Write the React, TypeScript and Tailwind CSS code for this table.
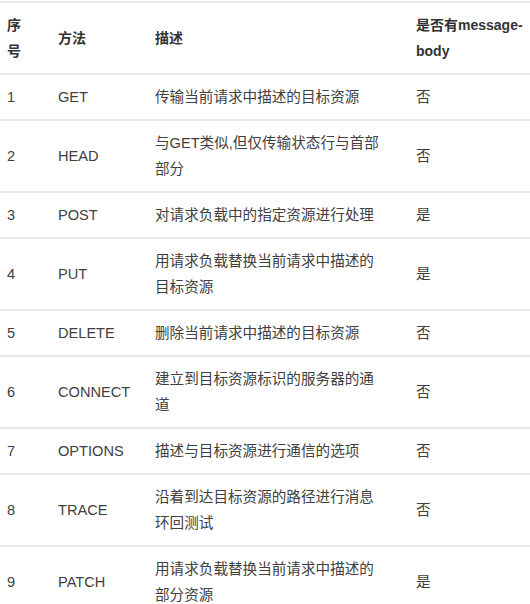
const rows = [
  { id: "1", method: "GET", desc: "传输当前请求中描述的目标资源", body: "否" },
  { id: "2", method: "HEAD", desc: "与GET类似,但仅传输状态行与首部部分", body: "否" },
  { id: "3", method: "POST", desc: "对请求负载中的指定资源进行处理", body: "是" },
  { id: "4", method: "PUT", desc: "用请求负载替换当前请求中描述的目标资源", body: "是" },
  { id: "5", method: "DELETE", desc: "删除当前请求中描述的目标资源", body: "否" },
  { id: "6", method: "CONNECT", desc: "建立到目标资源标识的服务器的通道", body: "否" },
  { id: "7", method: "OPTIONS", desc: "描述与目标资源进行通信的选项", body: "否" },
  { id: "8", method: "TRACE", desc: "沿着到达目标资源的路径进行消息环回测试", body: "否" },
  { id: "9", method: "PATCH", desc: "用请求负载替换当前请求中描述的部分资源", body: "是" },
];

export default function App() {
  return (
    <div className="w-[530px] h-[604px] overflow-hidden bg-white pt-[1px] font-['Liberation_Sans','Noto_Sans_CJK_SC',sans-serif] text-[14.6px] leading-[26px]">
      <table className="w-[530px] table-fixed border-collapse">
        <colgroup>
          <col className="w-[51px]" />
          <col className="w-[97px]" />
          <col className="w-[261px]" />
          <col className="w-[121px]" />
        </colgroup>
        {/* header */}
        <thead>
          <tr className="border-t-2 border-b-2 border-[#e6e9ee] text-[#333] text-[14px] font-bold">
            <th className="pl-[7px] pr-[20px] py-[9px] text-left align-middle">序号</th>
            <th className="px-[7px] py-[9px] text-left align-middle">方法</th>
            <th className="pl-[7px] pr-[28px] py-[9px] text-left align-middle">描述</th>
            <th className="pl-[7px] pr-[4px] py-[9px] text-left align-middle">是否有message-body</th>
          </tr>
        </thead>
        <tbody className="text-[#404040]">
          {rows.map((r) => (
            <tr key={r.id} className="border-b-2 border-[#e6e9ee]">
              <td className="pl-[7px] pr-[20px] py-[9px] align-middle">{r.id}</td>
              <td className="px-[7px] py-[9px] align-middle">{r.method}</td>
              <td className="pl-[7px] pr-[28px] py-[9px] align-middle">{r.desc}</td>
              <td className="px-[7px] py-[9px] align-middle">{r.body}</td>
            </tr>
          ))}
        </tbody>
      </table>
    </div>
  );
}
